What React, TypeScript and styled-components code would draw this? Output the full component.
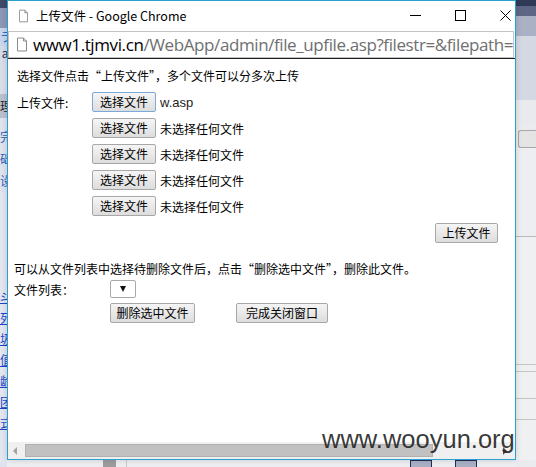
import React from "react";
import styled, { createGlobalStyle } from "styled-components";

const Global = createGlobalStyle`
  html, body { margin: 0; padding: 0; background: #ffffff; }
  body { font-family: "Noto Sans CJK SC", "Noto Sans", sans-serif; }
  #root { width: 536px; height: 467px; }
`;

const CJK = `"Noto Sans CJK SC", "Noto Sans", sans-serif`;

const Desktop = styled.div`
  position: relative;
  width: 536px;
  height: 467px;
  overflow: hidden;
  display: grid;
  grid-template-columns: 7px 509px 20px;
  grid-template-rows: 460px 7px;
  background: #e4e7ee;
`;

const LeftStrip = styled.div`
  grid-column: 1;
  grid-row: 1 / 3;
  display: flex;
  flex-direction: column;
  overflow: hidden;
  background: #dfe3ee;
`;

const StripBlock = styled.div<{ $h: number; $bg: string }>`
  height: ${(p) => p.$h}px;
  flex: none;
  background: ${(p) => p.$bg};
  overflow: hidden;
  display: flex;
  justify-content: flex-end;
  align-items: center;
`;

const StripGlyph = styled.span<{ $color: string; $under?: boolean }>`
  font-family: ${CJK};
  font-size: 12px;
  line-height: 14px;
  color: ${(p) => p.$color};
  white-space: nowrap;
  margin-right: -5px;
  text-decoration: ${(p) => (p.$under ? "underline" : "none")};
`;

const RightStrip = styled.div`
  grid-column: 3;
  grid-row: 1 / 3;
  display: flex;
  flex-direction: column;
  background: #e9ebef;
`;

const RightBlock = styled.div<{ $h: number; $bg: string; $line?: string }>`
  height: ${(p) => p.$h}px;
  flex: none;
  background: ${(p) => p.$bg};
  border-bottom: ${(p) => (p.$line ? `1px solid ${p.$line}` : "none")};
`;

const RightButtonEdge = styled.div`
  height: 16px;
  margin: 6px 0 0 2px;
  border: 1px solid #a8a8a8;
  border-right: none;
  border-radius: 3px 0 0 3px;
  background: #e4e4e4;
`;

const BottomStrip = styled.div`
  grid-column: 2;
  grid-row: 2;
  display: flex;
  align-items: flex-start;
  background: #eceef1;
`;

const BottomPiece = styled.div<{ $w: number; $ml: number; $bg: string; $border?: string }>`
  width: ${(p) => p.$w}px;
  margin-left: ${(p) => p.$ml}px;
  height: 7px;
  flex: none;
  background: ${(p) => p.$bg};
  border: ${(p) => (p.$border ? `1px solid ${p.$border}` : "none")};
  border-bottom: none;
  box-sizing: border-box;
`;

const Window = styled.div`
  position: absolute;
  left: 7px;
  top: 0;
  width: 509px;
  height: 460px;
  box-sizing: border-box;
  border: 1px solid #2a9fd0;
  background: #ffffff;
  display: flex;
  flex-direction: column;
  box-shadow: 0 0 6px rgba(0, 0, 0, 0.15);
`;

const TitleBar = styled.div`
  height: 29px;
  flex: none;
  display: flex;
  align-items: center;
  padding-left: 11px;
  background: #ffffff;
`;

const TitleText = styled.span`
  margin-left: 8px;
  font-family: ${CJK};
  font-size: 12.5px;
  color: #000000;
  white-space: nowrap;
  flex: 1;
`;

const Controls = styled.div`
  display: flex;
  align-items: center;
  gap: 34px;
  padding-right: 4px;
`;

const AddressBar = styled.div`
  height: 27px;
  flex: none;
  box-sizing: border-box;
  margin: 1px 1px 0 0;
  border: 1px solid #c4c4c4;
  display: flex;
  align-items: center;
  padding-left: 8px;
  overflow: hidden;
`;

const Url = styled.span`
  margin-left: 6px;
  font-family: "Open Sans", "Noto Sans", sans-serif;
  font-size: 17px;
  letter-spacing: -0.4px;
  color: #6f6f6f;
  white-space: nowrap;
`;

const Host = styled.span`
  color: #000000;
`;

const Divider = styled.div`
  height: 1px;
  flex: none;
  background: #1c1c1c;
`;

const Page = styled.div`
  height: 383px;
  flex: none;
  box-sizing: border-box;
  padding-top: 8px;
  font-family: ${CJK};
  font-size: 12px;
  color: #000000;
  display: flex;
  flex-direction: column;
`;

const Para = styled.div<{ $indent: number }>`
  height: 18px;
  line-height: 18px;
  padding-left: ${(p) => p.$indent}px;
  white-space: nowrap;
`;

const FileRows = styled.div`
  margin-top: 7px;
  display: flex;
  flex-direction: column;
  gap: 6px;
`;

const FileRow = styled.div`
  display: grid;
  grid-template-columns: 75px auto 1fr;
  align-items: center;
  padding-left: 9px;
  height: 20px;
`;

const FileStatus = styled.span<{ $latin?: boolean }>`
  margin-left: 4px;
  font-family: ${(p) => (p.$latin ? `"Liberation Sans", Arial, sans-serif` : CJK)};
  font-size: ${(p) => (p.$latin ? "13px" : "12px")};
  color: ${(p) => (p.$latin ? "#1d1d1d" : "#000")};
  white-space: nowrap;
`;

const Btn = styled.button<{ $w: number; $focus?: boolean }>`
  width: ${(p) => p.$w}px;
  height: 20px;
  box-sizing: border-box;
  padding: 0;
  margin: 0;
  font-family: ${CJK};
  font-size: 12px;
  line-height: 18px;
  color: #000;
  background: linear-gradient(#f5f5f5, #dddddd);
  border: 1px solid ${(p) => (p.$focus ? "#7da8da" : "#a7a7a7")};
  border-radius: 2px;
  white-space: nowrap;
`;

const UploadRow = styled.div`
  margin-top: 7px;
  display: flex;
  justify-content: flex-end;
  padding-right: 17px;
`;

const Para2 = styled(Para)`
  margin-top: 17px;
`;

const ListRow = styled.div`
  margin-top: 2px;
  display: grid;
  grid-template-columns: 96px auto;
  align-items: start;
  padding-left: 6px;
  height: 18px;
`;

const ListLabel = styled.span`
  line-height: 18px;
  padding-top: 1px;
`;

const SelectBox = styled.div`
  width: 26px;
  height: 18px;
  box-sizing: border-box;
  border: 1px solid #a9a9a9;
  border-radius: 2px;
  background: #fff;
  display: flex;
  align-items: center;
  justify-content: center;
`;

const Caret = styled.span`
  width: 0;
  height: 0;
  border-left: 3.5px solid transparent;
  border-right: 3.5px solid transparent;
  border-top: 6px solid #111;
`;

const ActionRow = styled.div`
  margin-top: 5px;
  display: flex;
  gap: 41px;
  padding-left: 102px;
`;

const HScroll = styled.div`
  height: 17px;
  flex: none;
  background: #f0f0f0;
  display: flex;
  align-items: center;
`;

const ArrowLeft = styled.span`
  margin-left: 5px;
  width: 0;
  height: 0;
  border-top: 4px solid transparent;
  border-bottom: 4px solid transparent;
  border-right: 4px solid #a3a3a3;
`;

const Thumb = styled.div`
  margin-left: 8px;
  width: 408px;
  height: 13px;
  box-sizing: border-box;
  background: #c1c1c1;
  border: 1px solid #b0b0b0;
`;

const ArrowRight = styled.span`
  margin-left: 70px;
  width: 0;
  height: 0;
  border-top: 4px solid transparent;
  border-bottom: 4px solid transparent;
  border-left: 4px solid #505050;
`;

const Watermark = styled.div`
  position: absolute;
  left: 322px;
  top: 424px;
  font-family: "Liberation Sans", Arial, sans-serif;
  font-size: 25.5px;
  line-height: 30px;
  color: rgba(38, 38, 38, 0.92);
  white-space: nowrap;
`;

const PageIcon = ({ w, h }: { w: number; h: number }) => (
  <svg width={w} height={h} viewBox="0 0 10 14" style={{ flex: "none" }}>
    <path d="M0.5 0.5 H6.5 L9.5 3.5 V13.5 H0.5 Z" fill="#fff" stroke="#8a8a8a" strokeWidth="1" />
    <path d="M6.5 0.5 V3.5 H9.5" fill="none" stroke="#8a8a8a" strokeWidth="1" />
  </svg>
);

const MinIcon = () => (
  <svg width="11" height="11" viewBox="0 0 11 11">
    <line x1="0" y1="5.5" x2="11" y2="5.5" stroke="#000" strokeWidth="1" />
  </svg>
);
const MaxIcon = () => (
  <svg width="11" height="11" viewBox="0 0 11 11">
    <rect x="0.5" y="0.5" width="10" height="10" fill="none" stroke="#000" strokeWidth="1" />
  </svg>
);
const CloseIcon = () => (
  <svg width="11" height="11" viewBox="0 0 11 11">
    <path d="M0.5 0.5 L10.5 10.5 M10.5 0.5 L0.5 10.5" stroke="#000" strokeWidth="1" />
  </svg>
);

const leftBlocks: { h: number; bg: string; g?: string; c?: string; u?: boolean }[] = [
  { h: 8, bg: "#3f4a66" },
  { h: 20, bg: "#8c98b4" },
  { h: 18, bg: "#c9d5ea", g: "ラ", c: "#2b6cc4" },
  { h: 14, bg: "#d2dbea", g: "al", c: "#334" },
  { h: 34, bg: "#d8dde8" },
  { h: 24, bg: "#b9bfcc", g: "理", c: "#222" },
  { h: 8, bg: "#dfe3ee" },
  { h: 22, bg: "#dfe3ee", g: "完", c: "#2a5fb8" },
  { h: 22, bg: "#dfe3ee", g: "础", c: "#2a5fb8" },
  { h: 22, bg: "#dfe3ee", g: "设", c: "#2a5fb8" },
  { h: 94, bg: "#e3e6ef" },
  { h: 21, bg: "#e3e6ef", g: "斗", c: "#1a44c8", u: true },
  { h: 21, bg: "#e3e6ef", g: "列", c: "#1a44c8", u: true },
  { h: 21, bg: "#e3e6ef", g: "圾", c: "#1a44c8", u: true },
  { h: 21, bg: "#e3e6ef", g: "值", c: "#1a44c8", u: true },
  { h: 21, bg: "#e3e6ef", g: "龄", c: "#1a44c8", u: true },
  { h: 21, bg: "#e3e6ef", g: "团", c: "#1a44c8", u: true },
  { h: 21, bg: "#e3e6ef", g: "式", c: "#1a44c8", u: true },
  { h: 30, bg: "#e3e6ef", g: "l", c: "#1a44c8" },
];

const files = ["w.asp", "", "", "", ""];

export default function App() {
  return (
    <>
      <Global />
      <Desktop>
        <LeftStrip>
          {leftBlocks.map((b, i) => (
            <StripBlock key={i} $h={b.h} $bg={b.bg}>
              {b.g ? (
                <StripGlyph $color={b.c || "#000"} $under={b.u}>
                  {b.g}
                </StripGlyph>
              ) : null}
            </StripBlock>
          ))}
        </LeftStrip>
        <RightStrip>
          <RightBlock $h={6} $bg="#2f3a56" />
          <RightBlock $h={10} $bg="#5d6785" />
          <RightBlock $h={20} $bg="#aab1c4" />
          <RightBlock $h={64} $bg="#d3d8e2" />
          <RightBlock $h={24} $bg="#e8eaee" />
          <RightButtonEdge />
          <RightBlock $h={88} $bg="#eceef1" $line="#b8b8b8" />
          <RightBlock $h={127} $bg="#eef0f2" $line="#c4c4c4" />
          <RightBlock $h={6} $bg="#eef0f2" $line="#c4c4c4" />
          <RightBlock $h={26} $bg="#eef0f2" $line="#c4c4c4" />
          <RightBlock $h={20} $bg="#eef0f2" $line="#c4c4c4" />
          <RightBlock $h={40} $bg="#eef0f2" />
        </RightStrip>
        <BottomStrip>
          <BottomPiece $w={13} $ml={96} $bg="#9c9c9c" />
          <BottomPiece $w={1} $ml={10} $bg="#c9c9c9" />
          <BottomPiece $w={22} $ml={283} $bg="#aab0c4" $border="#1f2d5a" />
          <BottomPiece $w={22} $ml={23} $bg="#aab0c4" $border="#1f2d5a" />
        </BottomStrip>

        <Window>
          <TitleBar>
            <PageIcon w={9} h={14} />
            <TitleText>上传文件 - Google Chrome</TitleText>
            <Controls>
              <MinIcon />
              <MaxIcon />
              <CloseIcon />
            </Controls>
          </TitleBar>
          <AddressBar>
            <PageIcon w={10} h={15} />
            <Url>
              <Host>www1.tjmvi.cn</Host>/WebApp/admin/file_upfile.asp?filestr=&amp;filepath=
            </Url>
          </AddressBar>
          <Divider />
          <Page>
            <Para $indent={9}>选择文件点击“上传文件”，多个文件可以分多次上传</Para>
            <FileRows>
              {files.map((f, i) => (
                <FileRow key={i}>
                  <span>{i === 0 ? "上传文件:" : ""}</span>
                  <Btn $w={64} $focus={i === 0}>
                    选择文件
                  </Btn>
                  <FileStatus $latin={!!f}>{f || "未选择任何文件"}</FileStatus>
                </FileRow>
              ))}
            </FileRows>
            <UploadRow>
              <Btn $w={63}>上传文件</Btn>
            </UploadRow>
            <Para2 $indent={6}>可以从文件列表中选择待删除文件后，点击“删除选中文件”，删除此文件。</Para2>
            <ListRow>
              <ListLabel>文件列表：</ListLabel>
              <SelectBox>
                <Caret />
              </SelectBox>
            </ListRow>
            <ActionRow>
              <Btn $w={85}>删除选中文件</Btn>
              <Btn $w={92}>完成关闭窗口</Btn>
            </ActionRow>
          </Page>
          <HScroll>
            <ArrowLeft />
            <Thumb />
            <ArrowRight />
          </HScroll>
        </Window>
        <Watermark>www.wooyun.org</Watermark>
      </Desktop>
    </>
  );
}
